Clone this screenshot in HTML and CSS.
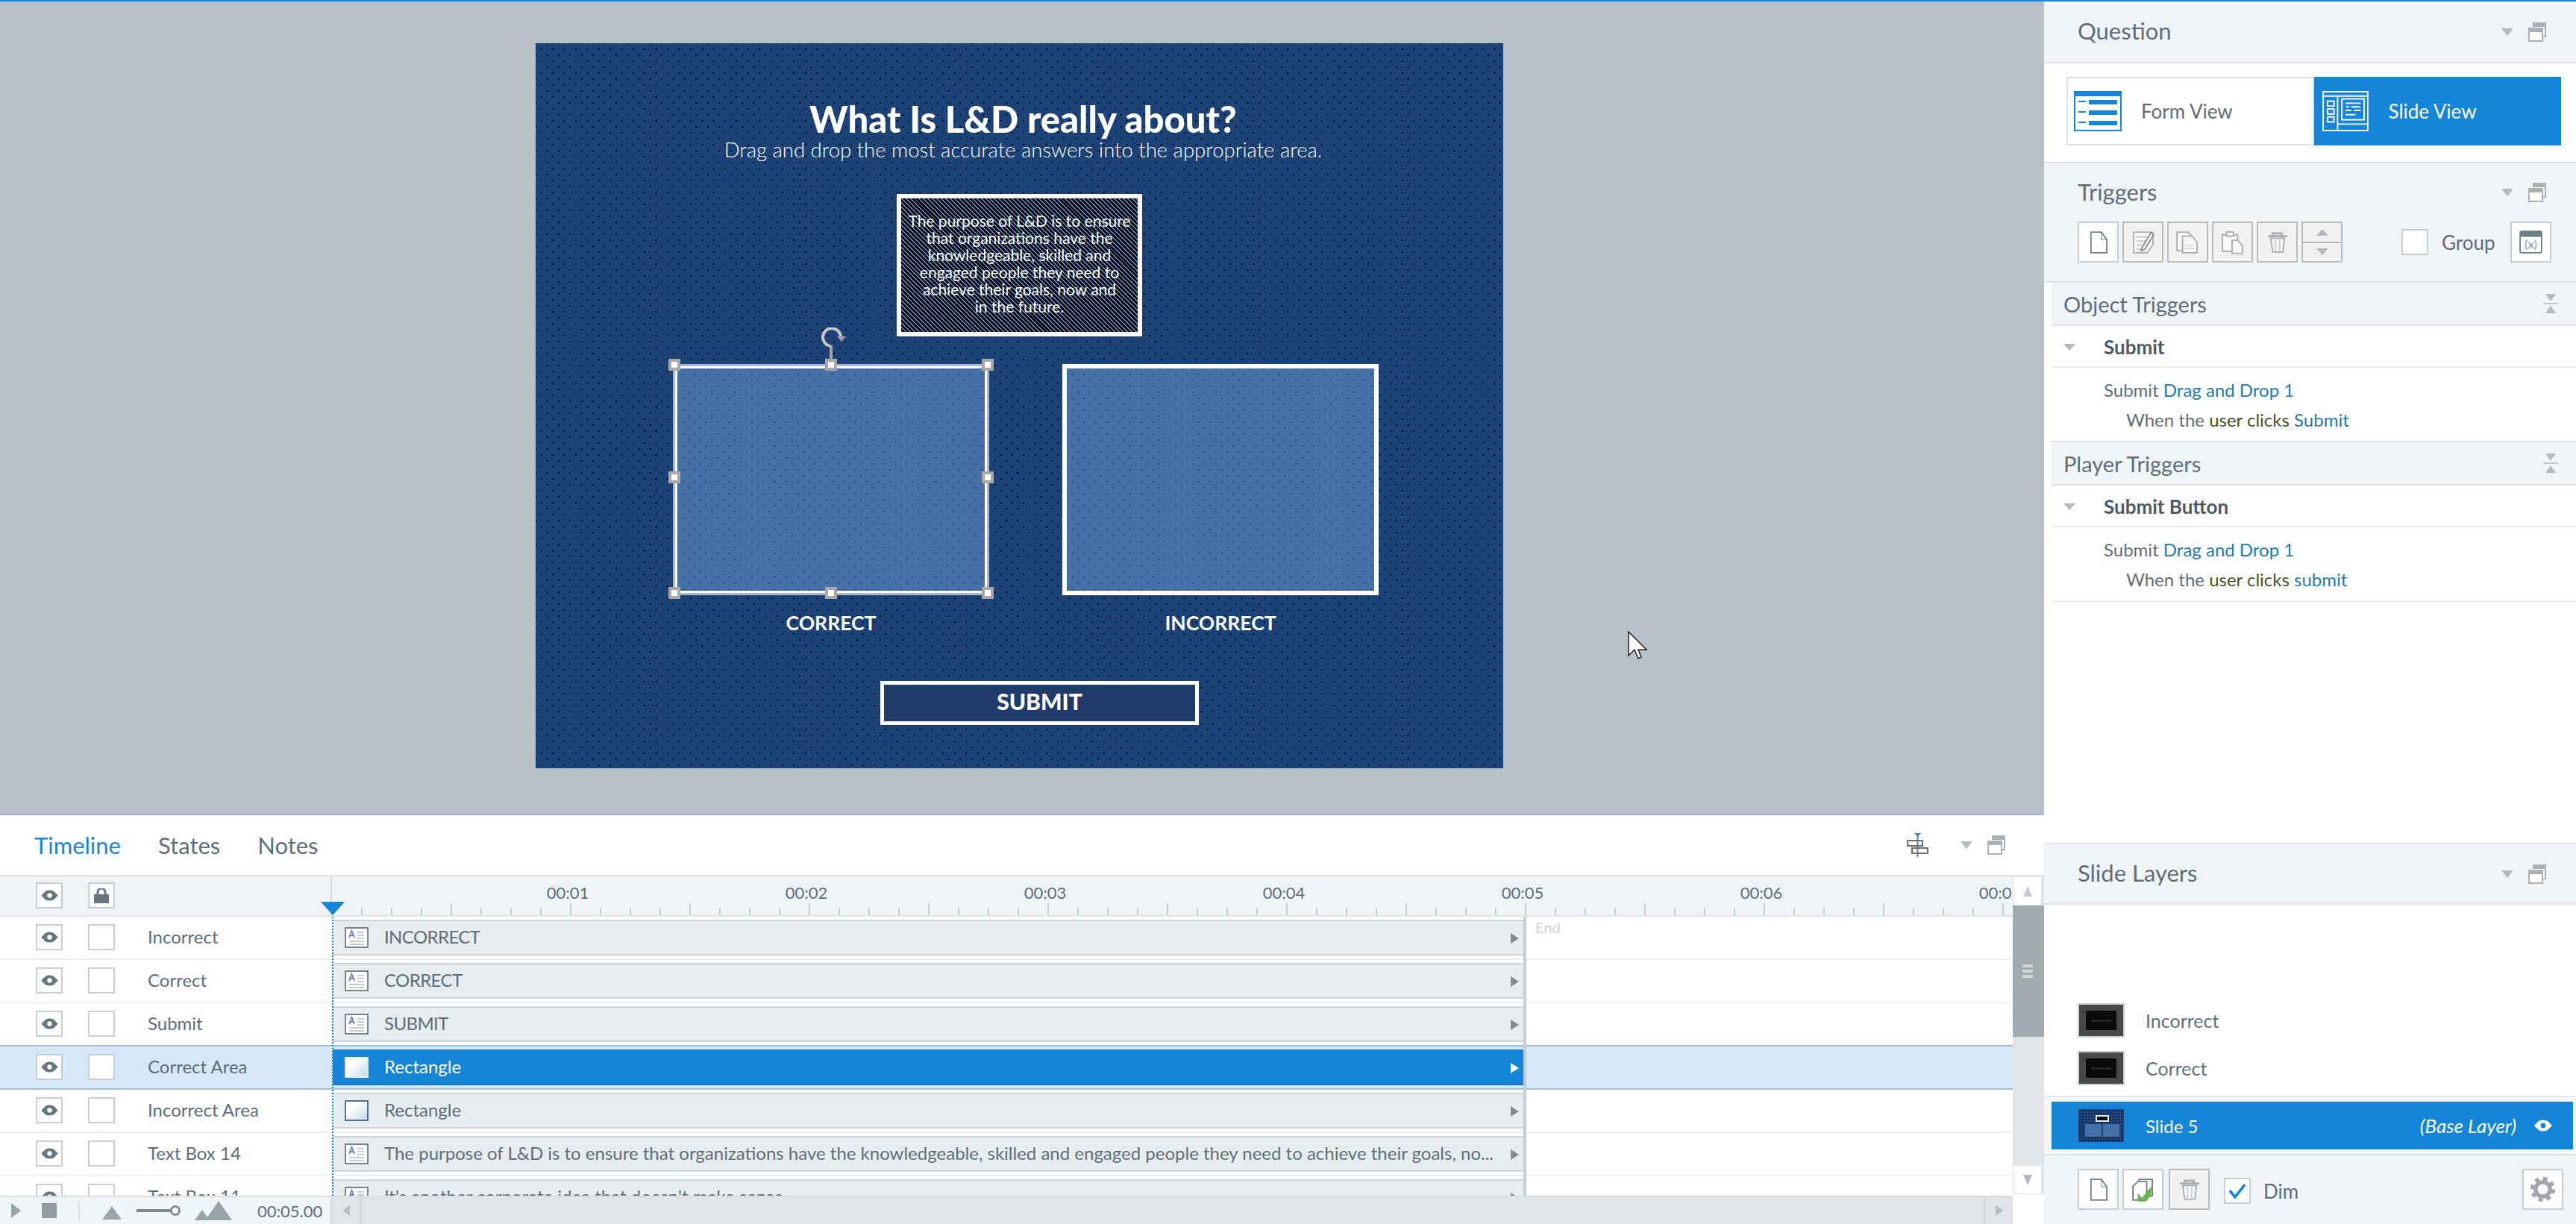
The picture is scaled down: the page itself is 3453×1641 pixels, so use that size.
FILE: index.html
```html
<!DOCTYPE html>
<html lang="en">
<head>
    <meta charset="UTF-8">
    <title>Slide 5 - Drag and Drop</title>
    <link rel="stylesheet" href="styles.css">
</head>
<body>

<svg class="defs" width="0" height="0">
    <symbol id="eye" viewBox="0 0 24 16"><path d="M0 8 L6 2 Q12 -1 18 2 L24 8 L18 14 Q12 17 6 14Z" fill="#66767e"/><circle cx="12" cy="8" r="3.4" fill="#fff"/></symbol>
    <symbol id="doc" viewBox="0 0 55 55"><path d="M17 13h15l8 11v19H17z" fill="#fff" stroke="#6f7f85" stroke-width="2"/><path d="M32 13v11h8" fill="none" stroke="#6f7f85" stroke-width="1"/></symbol>
    <symbol id="trash" viewBox="0 0 55 55"><path d="M14 19h28M21 19v-4h13v4" fill="none" stroke="#a8aeb2" stroke-width="3"/><path d="M18 22h20l-2 20H21z" fill="#f4f4f4" stroke="#a8aeb2" stroke-width="2"/><path d="M25 24v16M31 24v16" stroke="#cfd3d6" stroke-width="2"/></symbol>
    <symbol id="textbar" viewBox="0 0 32 28"><rect x="1" y="1" width="30" height="26" fill="#fff" stroke="#76848c" stroke-width="2"/><path d="M6 14 L9.5 5 L13 14 M7.5 11h4" fill="none" stroke="#7786bd" stroke-width="2"/><path d="M17 7h9M17 11h9M17 15h9M6 19h20M6 23h20" stroke="#c5cbd0" stroke-width="2"/></symbol>
    <symbol id="win" viewBox="0 0 24 26"><path d="M6 1h17v18h-5" fill="#fff" stroke="#a9b1b7" stroke-width="2"/><rect x="6" y="1" width="17" height="5" fill="#a9b1b7"/><rect x="1" y="8" width="18" height="17" fill="#fff" stroke="#a9b1b7" stroke-width="2"/><rect x="1" y="8" width="18" height="5" fill="#a9b1b7"/></symbol>
    <symbol id="collapse" viewBox="0 0 20 26"><path d="M3 0h14l-7 10zM10 16l7 10H3z" fill="#b2bac0"/><path d="M0 13h20" stroke="#b2bac0" stroke-width="1.5"/></symbol>
</svg>

<div class="app">
    <div class="workspace">
        <div class="stage">
            <div class="slide">
                <h1 class="slide-title">What Is L&amp;D really about?</h1>
                <p class="slide-sub">Drag and drop the most accurate answers into the appropriate area.</p>

                <div class="drag-text">
                    The purpose of L&amp;D is to ensure<br>
                    that organizations have the<br>
                    knowledgeable, skilled and<br>
                    engaged people they need to<br>
                    achieve their goals, now and<br>
                    in the future.
                </div>

                <div class="area area-correct">
                    <i class="handle h-tl"></i><i class="handle h-tc"></i><i class="handle h-tr"></i>
                    <i class="handle h-ml"></i><i class="handle h-mr"></i>
                    <i class="handle h-bl"></i><i class="handle h-bc"></i><i class="handle h-br"></i>
                    <svg class="rotate" viewBox="0 0 40 44">
                        <path d="M18 42V24" stroke="#a8a8a8" stroke-width="4" fill="none"/>
                        <path d="M17 25A12 12 0 1 1 31 13" stroke="#c8c8c8" stroke-width="4" fill="none"/>
                        <path d="M26 12h12l-6 7z" fill="#a0a0a0"/>
                    </svg>
                </div>
                <div class="area area-incorrect"></div>

                <div class="area-label label-correct">CORRECT</div>
                <div class="area-label label-incorrect">INCORRECT</div>

                <div class="slide-submit">SUBMIT</div>
            </div>

            <svg class="cursor" viewBox="0 0 28 40">
                <path d="M1 1V33L9 25L14 37L18 35L14 25H25Z" fill="#fff" stroke="#222" stroke-width="1.500"/>
            </svg>
        </div>

        <div class="timeline">
            <div class="tabs">
                <span class="tab active">Timeline</span>
                <span class="tab">States</span>
                <span class="tab">Notes</span>
                <svg class="align-icon" viewBox="0 0 29 32">
                    <path d="M10 0h9l-4.500 5z" fill="#4d7fb5"/>
                    <path d="M14.500 3v29" stroke="#4d7fb5" stroke-width="2"/>
                    <rect x="1" y="10" width="20" height="7" fill="none" stroke="#6e6e6e" stroke-width="2"/>
                    <rect x="7" y="20" width="21" height="7" fill="none" stroke="#6e6e6e" stroke-width="2"/>
                </svg>
                <span class="drop"></span>
                <svg class="win-icon"><use href="#win"/></svg>
            </div>

            <div class="tl-body">
                <div class="tl-main">
                    <div class="ruler-row">
                        <div class="ruler-head">
                            <span class="tbtn"><svg class="eye"><use href="#eye"/></svg></span>
                            <span class="tbtn">
                                <svg class="lock" viewBox="0 0 20 20"><path d="M5 9V5a5 5 0 0 1 10 0v4" fill="none" stroke="#66767e" stroke-width="3"/><rect y="8" width="20" height="12" fill="#66767e"/></svg>
                            </span>
                        </div>
                        <div class="ruler">
                            <div class="ruler-labels">
                                <span>00:01</span><span>00:02</span><span>00:03</span><span>00:04</span>
                                <span>00:05</span><span>00:06</span><span>00:07</span>
                            </div>
                        </div>
                    </div>

                    <div class="rows">
                        <div class="row">
                            <div class="row-head"><span class="tbtn"><svg class="eye"><use href="#eye"/></svg></span><span class="tbtn"></span><span class="row-name">Incorrect</span></div>
                            <div class="bar"><svg class="bar-icon"><use href="#textbar"/></svg><span class="bar-text caps">INCORRECT</span><span class="bar-arrow"></span></div>
                            <div class="row-rest"><span class="end-text">End</span></div>
                        </div>
                        <div class="row">
                            <div class="row-head"><span class="tbtn"><svg class="eye"><use href="#eye"/></svg></span><span class="tbtn"></span><span class="row-name">Correct</span></div>
                            <div class="bar"><svg class="bar-icon"><use href="#textbar"/></svg><span class="bar-text caps">CORRECT</span><span class="bar-arrow"></span></div>
                            <div class="row-rest"></div>
                        </div>
                        <div class="row">
                            <div class="row-head"><span class="tbtn"><svg class="eye"><use href="#eye"/></svg></span><span class="tbtn"></span><span class="row-name">Submit</span></div>
                            <div class="bar"><svg class="bar-icon"><use href="#textbar"/></svg><span class="bar-text caps">SUBMIT</span><span class="bar-arrow"></span></div>
                            <div class="row-rest"></div>
                        </div>
                        <div class="row selected">
                            <div class="row-head"><span class="tbtn"><svg class="eye"><use href="#eye"/></svg></span><span class="tbtn"></span><span class="row-name">Correct Area</span></div>
                            <div class="bar"><span class="rect-icon"></span><span class="bar-text">Rectangle</span><span class="bar-arrow"></span></div>
                            <div class="row-rest"></div>
                        </div>
                        <div class="row">
                            <div class="row-head"><span class="tbtn"><svg class="eye"><use href="#eye"/></svg></span><span class="tbtn"></span><span class="row-name">Incorrect Area</span></div>
                            <div class="bar"><span class="rect-icon"></span><span class="bar-text">Rectangle</span><span class="bar-arrow"></span></div>
                            <div class="row-rest"></div>
                        </div>
                        <div class="row">
                            <div class="row-head"><span class="tbtn"><svg class="eye"><use href="#eye"/></svg></span><span class="tbtn"></span><span class="row-name">Text Box 14</span></div>
                            <div class="bar"><svg class="bar-icon"><use href="#textbar"/></svg><span class="bar-text">The purpose of L&amp;D is to ensure that organizations have the knowledgeable, skilled and engaged people they need to achieve their goals, no...</span><span class="bar-arrow"></span></div>
                            <div class="row-rest"></div>
                        </div>
                        <div class="row">
                            <div class="row-head"><span class="tbtn"><svg class="eye"><use href="#eye"/></svg></span><span class="tbtn"></span><span class="row-name">Text Box 11</span></div>
                            <div class="bar"><svg class="bar-icon"><use href="#textbar"/></svg><span class="bar-text">It's another corporate idea that doesn't make sense.</span><span class="bar-arrow"></span></div>
                            <div class="row-rest"></div>
                        </div>
                        <i class="end-line"></i>
                        <i class="play-line"></i>
                    </div>

                    <div class="tl-foot">
                        <div class="tl-controls">
                            <i class="play"></i>
                            <i class="stop"></i>
                            <i class="ctl-sep"></i>
                            <svg class="zoom-small" viewBox="0 0 26 18"><path d="M0 18L13 0L26 18z" fill="#98a3aa"/></svg>
                            <svg class="zoom-slider" viewBox="0 0 60 16"><path d="M0 8h46" stroke="#7f8c93" stroke-width="4"/><circle cx="52" cy="8" r="5.500" fill="#fff" stroke="#7f8c93" stroke-width="3"/></svg>
                            <svg class="zoom-big" viewBox="0 0 52 26"><path d="M0 26L10 12L20 26zM14 26L32 0L50 26z" fill="#98a3aa"/></svg>
                            <span class="tl-time">00:05.00</span>
                        </div>
                        <div class="hscroll">
                            <span class="hs-btn"><i class="hs-left"></i></span>
                            <span class="hs-track"></span>
                            <span class="hs-btn end"><i class="hs-right"></i></span>
                        </div>
                    </div>
                </div>

                <div class="vscroll">
                    <span class="vs-btn"><i class="vs-up"></i></span>
                    <span class="vs-thumb"><i></i><i></i><i></i></span>
                    <span class="vs-track"></span>
                    <span class="vs-btn"><i class="vs-down"></i></span>
                    <span class="vs-corner"></span>
                </div>
            </div>
        </div>
    </div>

    <div class="panel">
        <div class="panel-head">
            <span class="panel-title">Question</span>
            <span class="drop"></span>
            <svg class="win-icon"><use href="#win"/></svg>
        </div>
        <div class="view-switch">
            <div class="view-btn">
                <svg class="view-icon" viewBox="0 0 64 54">
                    <rect x="1" y="1" width="62" height="52" fill="#fff" stroke="#1485d8" stroke-width="2"/>
                    <rect width="64" height="7" fill="#1485d8"/>
                    <path d="M6 14h10M6 28h10M6 42h10" stroke="#1485d8" stroke-width="2"/>
                    <path d="M20 12h38v6H20zM20 26h38v6H20zM20 40h38v6H20z" fill="#1485d8"/>
                </svg>
                <span>Form View</span>
            </div>
            <div class="view-btn on">
                <svg class="view-icon" viewBox="0 0 64 56">
                    <rect x="1" y="1" width="62" height="54" fill="none" stroke="#fff" stroke-width="2"/>
                    <path d="M0 7h64M21 7v48M21 46h42" stroke="#fff" stroke-width="2" fill="none"/>
                    <rect x="7" y="14" width="9" height="7" fill="none" stroke="#fff" stroke-width="2"/>
                    <rect x="7" y="25" width="9" height="7" fill="none" stroke="#fff" stroke-width="2"/>
                    <rect x="7" y="36" width="9" height="7" fill="none" stroke="#fff" stroke-width="2"/>
                    <rect x="27" y="11" width="31" height="29" fill="none" stroke="#fff" stroke-width="2"/>
                    <path d="M32 17h21M33 22h4M40 22h13M32 27h8M44 27h9M32 33h14" stroke="#fff" stroke-width="2"/>
                </svg>
                <span>Slide View</span>
            </div>
        </div>

        <div class="triggers-box">
            <div class="panel-head plain">
                <span class="panel-title">Triggers</span>
                <span class="drop"></span>
                <svg class="win-icon"><use href="#win"/></svg>
            </div>
            <div class="toolbar">
                <span class="tool"><svg><use href="#doc"/></svg></span>
                <span class="tool off">
                    <svg viewBox="0 0 55 55">
                        <path d="M14 13h28v18l-8 12H14z" fill="#f8f8f8" stroke="#aab0b4" stroke-width="2"/>
                        <path d="M18 20h16M18 26h14M18 32h12M18 38h10" stroke="#c4c8cb" stroke-width="2"/>
                        <path d="M26 36l13-22 4 3-13 21-5 2z" fill="#fff" stroke="#8c8c8c" stroke-width="2"/>
                    </svg>
                </span>
                <span class="tool off">
                    <svg viewBox="0 0 55 55">
                        <path d="M12 13h16l6 7v20H12z" fill="#f8f8f8" stroke="#a8aeb2" stroke-width="2"/>
                        <path d="M20 19h14l7 9v15H20z" fill="#f8f8f8" stroke="#a8aeb2" stroke-width="2"/>
                        <path d="M24 32h13M24 37h13" stroke="#cfd3d6" stroke-width="1.500"/>
                    </svg>
                </span>
                <span class="tool off">
                    <svg viewBox="0 0 55 55">
                        <path d="M13 17h22v24H13z" fill="#f8f8f8" stroke="#a8aeb2" stroke-width="2"/>
                        <rect x="19" y="13" width="10" height="6" fill="#f8f8f8" stroke="#a8aeb2" stroke-width="2"/>
                        <path d="M27 25h8l7 8v11H27z" fill="#f8f8f8" stroke="#a8aeb2" stroke-width="2"/>
                    </svg>
                </span>
                <span class="tool off"><svg><use href="#trash"/></svg></span>
                <span class="tool-split">
                    <span class="split-part"><i class="tri-up"></i></span>
                    <span class="split-part"><i class="tri-down"></i></span>
                </span>
                <span class="check"></span>
                <span class="check-label">Group</span>
                <span class="tool var-tool">
                    <svg viewBox="0 0 55 55">
                        <rect x="12" y="12" width="31" height="31" rx="2" fill="#fff" stroke="#6f7f85" stroke-width="2"/>
                        <rect x="12" y="12" width="31" height="8" fill="#6f7f85"/>
                        <text x="27.500" y="37" text-anchor="middle" class="var-text">(x)</text>
                    </svg>
                </span>
            </div>
        </div>

        <div class="trigger-list">
            <div class="group-head">
                <span class="group-title">Object Triggers</span>
                <svg class="collapse"><use href="#collapse"/></svg>
            </div>
            <div class="trig-row"><i class="tri-down small"></i><b>Submit</b></div>
            <div class="trig-detail">
                <div>Submit <span class="link">Drag and Drop 1</span></div>
                <div class="indent">When the <span class="kw">user clicks</span> <span class="link">Submit</span></div>
            </div>
            <div class="group-head">
                <span class="group-title">Player Triggers</span>
                <svg class="collapse"><use href="#collapse"/></svg>
            </div>
            <div class="trig-row"><i class="tri-down small"></i><b>Submit Button</b></div>
            <div class="trig-detail">
                <div>Submit <span class="link">Drag and Drop 1</span></div>
                <div class="indent">When the <span class="kw">user clicks</span> <span class="link">submit</span></div>
            </div>
        </div>

        <div class="panel-head layers-head">
            <span class="panel-title">Slide Layers</span>
            <span class="drop"></span>
            <svg class="win-icon"><use href="#win"/></svg>
        </div>
        <div class="layers">
            <div class="layer">
                <span class="thumb"><i></i></span>
                <span>Incorrect</span>
            </div>
            <div class="layer">
                <span class="thumb"><i></i></span>
                <span>Correct</span>
            </div>
        </div>
        <div class="base-wrap">
            <div class="base-layer">
                <span class="thumb-base"><i class="tb-text"></i><i class="tb-a"></i><i class="tb-b"></i></span>
                <span class="base-name">Slide 5</span>
                <em>(Base Layer)</em>
                <svg class="eye-white" viewBox="0 0 24 16"><path d="M0 8 L6 2 Q12 -1 18 2 L24 8 L18 14 Q12 17 6 14Z" fill="#fff"/><circle cx="12" cy="8" r="3.400" fill="#1485d8"/></svg>
            </div>
        </div>
        <div class="layers-foot">
            <span class="tool"><svg><use href="#doc"/></svg></span>
            <span class="tool">
                <svg viewBox="0 0 55 55">
                    <path d="M22 13h19v24H22z" fill="#fff" stroke="#6f7f85" stroke-width="2"/>
                    <path d="M13 23l7-7h13v27H13z" fill="#fff" stroke="#6f7f85" stroke-width="2"/>
                    <path d="M20 33l6 7 14-17-1 14-8 8H20z" fill="#69b04a"/>
                </svg>
            </span>
            <span class="tool off"><svg><use href="#trash"/></svg></span>
            <span class="check dim">
                <svg viewBox="0 0 35 35"><path d="M6 17l8 10L29 8" fill="none" stroke="#1485d8" stroke-width="4"/></svg>
            </span>
            <span class="check-label">Dim</span>
            <span class="tool gear-tool">
                <svg viewBox="0 0 55 55">
                    <circle cx="27.500" cy="27.500" r="15" fill="none" stroke="#a2a6ab" stroke-width="6" stroke-dasharray="6 5.780"/>
                    <circle cx="27.500" cy="27.500" r="10.500" fill="none" stroke="#a2a6ab" stroke-width="6"/>
                </svg>
            </span>
        </div>
    </div>
</div>

</body>
</html>
```

FILE: styles.css
```css
* {
    box-sizing: border-box;
}

body {
    margin: 0;
    width: 3453px;
    height: 1641px;
    overflow: hidden;
    background: #fff;
    font-family: Lato, "Open Sans", sans-serif;
    color: #5f6e78;
}

.defs {
    position: absolute;
}

.app {
    display: flex;
    height: 1641px;
    border-top: 2px solid #1485d8;
}

/* left side */

.workspace {
    width: 2740px;
    flex: none;
    display: flex;
    flex-direction: column;
}

.stage {
    position: relative;
    height: 1088px;
    padding: 56px 0 0 718px;
    background: #b8c0c8;
}

.cursor {
    position: absolute;
    left: 2182px;
    top: 844px;
    width: 28px;
    height: 40px;
}

/* slide canvas */

.slide {
    position: relative;
    width: 1297px;
    height: 972px;
    background-color: #1c4277;
    background-image:
        radial-gradient(circle, #050c1c 1.3px, transparent 1.5px),
        radial-gradient(circle, #050c1c 1.3px, transparent 1.5px);
    background-size: 15.4px 16px;
    background-position: 0 0, 7.7px 8px;
    color: #fff;
}

.slide-title {
    position: absolute;
    left: 0;
    right: 0;
    top: 73px;
    margin: 0;
    padding-left: 10px;
    text-align: center;
    font-size: 49px;
    line-height: 56px;
    font-weight: 900;
}

.slide-sub {
    position: absolute;
    left: 0;
    right: 0;
    top: 124px;
    margin: 0;
    padding-left: 10px;
    text-align: center;
    font-size: 27.5px;
    line-height: 38px;
    font-weight: 300;
}

.drag-text {
    position: absolute;
    left: 484px;
    top: 202px;
    width: 329px;
    height: 191px;
    border: 6px solid #fff;
    padding-top: 18px;
    background-color: #020408;
    background-image: repeating-linear-gradient(45deg, #5f8cc4 0 1.4px, #020408 1.4px 4.2px);
    text-align: center;
    font-size: 21px;
    line-height: 23px;
}

.area {
    position: absolute;
    top: 430px;
    width: 424px;
    height: 310px;
    border: 6px solid #fff;
    background-color: #4670a8;
    background-image:
        radial-gradient(circle, #34507c 1.1px, transparent 1.5px),
        radial-gradient(circle, #34507c 1.1px, transparent 1.5px);
    background-size: 15.4px 16px;
    background-position: 0 0, 7.7px 8px;
}

.area-correct {
    left: 184px;
    outline: 3px solid #a9b8cc;
    outline-offset: -3px;
}

.area-incorrect {
    left: 706px;
}

.handle {
    position: absolute;
    width: 16px;
    height: 16px;
    background: #fff;
    border: 4px solid #a8a8a8;
}

.h-tl { left: -12px; top: -13px; }
.h-tc { left: 198px; top: -13px; }
.h-tr { left: 408px; top: -13px; }
.h-ml { left: -12px; top: 138px; }
.h-mr { left: 408px; top: 138px; }
.h-bl { left: -12px; top: 293px; }
.h-bc { left: 198px; top: 293px; }
.h-br { left: 408px; top: 293px; }

.rotate {
    position: absolute;
    left: 188px;
    top: -55px;
    width: 40px;
    height: 44px;
}

.area-label {
    position: absolute;
    top: 762px;
    width: 424px;
    text-align: center;
    font-size: 26.5px;
    line-height: 30px;
    font-weight: 700;
}

.label-correct {
    left: 184px;
}

.label-incorrect {
    left: 706px;
}

.slide-submit {
    position: absolute;
    left: 462px;
    top: 855px;
    width: 427px;
    height: 59px;
    border: 5px solid #fff;
    background: #1e3a68;
    text-align: center;
    font-size: 30px;
    line-height: 45px;
    font-weight: 900;
}

/* timeline */

.timeline {
    flex: 1;
    display: flex;
    flex-direction: column;
    min-height: 0;
    border-top: 3px solid #b0b7c6;
    background: #fff;
}

.tabs {
    height: 82px;
    flex: none;
    display: flex;
    align-items: center;
    padding-left: 46px;
    border-bottom: 2px solid #e0e4e8;
}

.tab {
    font-size: 31px;
    margin-right: 50px;
}

.tab.active {
    color: #1485d8;
}

.align-icon {
    width: 29px;
    height: 32px;
    margin-left: auto;
}

.drop {
    width: 0;
    height: 0;
    border-left: 8px solid transparent;
    border-right: 8px solid transparent;
    border-top: 10px solid #b2bac0;
}

.tabs .drop {
    margin-left: 43px;
}

.win-icon {
    width: 24px;
    height: 26px;
    margin-left: 20px;
}

.tabs .win-icon {
    margin-right: 52px;
}

.tl-body {
    flex: 1;
    min-height: 0;
    display: flex;
}

.tl-main {
    flex: 1;
    min-width: 0;
    display: flex;
    flex-direction: column;
}

.ruler-row {
    position: relative;
    height: 54px;
    flex: none;
    display: flex;
    background: #f0f4f7;
    border-bottom: 2px solid #e0e4e8;
}

.ruler-row::after {
    content: "";
    position: absolute;
    left: 430px;
    bottom: 0;
    border-left: 16px solid transparent;
    border-right: 16px solid transparent;
    border-top: 18px solid #1485d8;
}

.ruler-head {
    width: 445px;
    flex: none;
    display: flex;
    gap: 34px;
    padding: 8px 0 0 48px;
    border-right: 2px solid #d6dade;
}

.tbtn {
    width: 36px;
    height: 35px;
    flex: none;
    display: flex;
    align-items: center;
    justify-content: center;
    background: #fff;
    border: 2px solid #c5ced6;
}

.eye {
    width: 23px;
    height: 15px;
}

.lock {
    width: 20px;
    height: 20px;
}

.ruler {
    flex: 1;
    min-width: 0;
    overflow: hidden;
    background-image:
        linear-gradient(to right, #c4ced6 2px, transparent 2px),
        linear-gradient(to right, #c4ced6 2px, transparent 2px);
    background-size: 160px 16px, 40px 10px;
    background-position: -1px 100%, -1px 100%;
    background-repeat: repeat-x;
}

.ruler-labels {
    display: flex;
    padding-left: 156px;
    padding-top: 8px;
}

.ruler-labels span {
    width: 320px;
    flex: none;
    text-align: center;
    font-size: 22px;
    line-height: 28px;
}

.rows {
    position: relative;
    flex: 1;
    min-height: 0;
    overflow: hidden;
}

.row {
    height: 58px;
    display: flex;
    border-bottom: 2px solid #eef1f3;
}

.row.selected {
    background: #d6e8f7;
    border-bottom-color: #9cc0e0;
    box-shadow: 0 -2px 0 #9cc0e0;
}

.row-head {
    width: 445px;
    flex: none;
    display: flex;
    align-items: center;
    gap: 34px;
    padding: 0 0 2px 48px;
}

.row-head .row-name {
    margin-left: 10px;
    margin-bottom: 2px;
    font-size: 24px;
}

.bar {
    width: 1597px;
    height: 48px;
    margin: 4px 0 0 1px;
    flex: none;
    display: flex;
    align-items: center;
    padding-left: 16px;
    background: #e7ecef;
    border-top: 2px solid #cdd5dc;
    border-bottom: 2px solid #cdd5dc;
    font-size: 24px;
}

.selected .bar {
    background: #1485d8;
    border-color: #1485d8 #1485d8 #0f77c5;
    color: #fff;
}

.bar-icon {
    width: 32px;
    height: 28px;
    flex: none;
}

.rect-icon {
    width: 32px;
    height: 28px;
    flex: none;
    border: 2px solid #56708c;
    background: linear-gradient(135deg, #fff 30%, #c4dcec);
}

.selected .rect-icon {
    border-color: #e8eef4;
}

.bar-text {
    margin: 0 0 3px 21px;
    flex: 1;
    min-width: 0;
    white-space: nowrap;
    overflow: hidden;
}

.bar-text.caps {
    letter-spacing: -0.6px;
}

.bar-arrow {
    width: 0;
    height: 0;
    margin: 2px 7px 0 12px;
    border-top: 7px solid transparent;
    border-bottom: 7px solid transparent;
    border-left: 11px solid #808a90;
}

.selected .bar-arrow {
    border-left-color: #fff;
}

.row-rest {
    flex: 1;
    padding-left: 15px;
}

.end-text {
    font-size: 20px;
    line-height: 28px;
    color: #ccd3d8;
}

.end-line {
    position: absolute;
    left: 2042px;
    top: 0;
    bottom: 0;
    width: 4px;
    background: #c4ced6;
}

.play-line {
    position: absolute;
    left: 445px;
    top: 0;
    bottom: 0;
    border-left: 2px dotted #1485d8;
}

.tl-foot {
    height: 38px;
    flex: none;
    display: flex;
    border-top: 2px solid #d9dee2;
}

.tl-controls {
    width: 445px;
    flex: none;
    display: flex;
    align-items: center;
    padding-left: 15px;
    background: #f0f4f7;
    border-right: 2px solid #d9dee2;
}

.play {
    border-top: 10px solid transparent;
    border-bottom: 10px solid transparent;
    border-left: 13px solid #98a3aa;
}

.stop {
    width: 20px;
    height: 20px;
    margin-left: 28px;
    background: #8f9aa1;
}

.ctl-sep {
    width: 2px;
    height: 26px;
    margin-left: 29px;
    background: #dde2e6;
}

.zoom-small {
    width: 26px;
    height: 18px;
    margin: 6px 0 0 30px;
}

.zoom-slider {
    width: 60px;
    height: 16px;
    margin-left: 20px;
}

.zoom-big {
    width: 52px;
    height: 26px;
    margin: 0 0 0 18px;
}

.tl-time {
    margin-left: 32px;
    font-size: 22px;
}

.hscroll {
    flex: 1;
    display: flex;
    background: #e0e4e8;
}

.hs-btn {
    width: 39px;
    flex: none;
    display: flex;
    align-items: center;
    justify-content: center;
    border-right: 2px solid #d2d7db;
}

.hs-btn.end {
    border-right: 0;
    border-left: 2px solid #d2d7db;
}

.hs-track {
    flex: 1;
}

.hs-left {
    border-top: 7px solid transparent;
    border-bottom: 7px solid transparent;
    border-right: 10px solid #b6bec3;
}

.hs-right {
    border-top: 7px solid transparent;
    border-bottom: 7px solid transparent;
    border-left: 10px solid #b6bec3;
}

.vscroll {
    width: 42px;
    flex: none;
    display: flex;
    flex-direction: column;
    background: #e0e4e8;
}

.vs-btn {
    height: 39px;
    margin-right: 3px;
    flex: none;
    display: flex;
    align-items: center;
    justify-content: center;
    background: #fff;
    border: 1px solid #dfe3e6;
}

.vs-up {
    border-left: 6px solid transparent;
    border-right: 6px solid transparent;
    border-bottom: 14px solid #c3cbd0;
}

.vs-down {
    border-left: 6px solid transparent;
    border-right: 6px solid transparent;
    border-top: 14px solid #b2bac0;
}

.vs-thumb {
    height: 176px;
    flex: none;
    display: flex;
    flex-direction: column;
    align-items: center;
    justify-content: center;
    gap: 3px;
    padding-right: 3px;
    background: #a2abaf;
}

.vs-thumb i {
    width: 14px;
    height: 4px;
    background: #cfd5d8;
}

.vs-track {
    flex: 1;
}

.vs-corner {
    height: 40px;
    flex: none;
    background: #fff;
}

/* right panel */

.panel {
    flex: 1;
    min-width: 0;
    display: flex;
    flex-direction: column;
    background: #fff;
}

.panel-head {
    height: 83px;
    flex: none;
    display: flex;
    align-items: center;
    padding: 0 40px 0 45px;
    background: #f0f4f7;
    border-bottom: 2px solid #e0e4e8;
}

.panel-head.plain {
    height: 78px;
    border-bottom: 0;
}

.panel-title {
    margin: 0 auto 3px 0;
    font-size: 31px;
}

.view-switch {
    height: 134px;
    flex: none;
    display: flex;
    padding: 18px 20px 0 30px;
    border-bottom: 2px solid #e0e4e8;
}

.view-btn {
    flex: 1;
    height: 92px;
    display: flex;
    align-items: center;
    padding-left: 8px;
    gap: 26px;
    border: 2px solid #e0e4e8;
    font-size: 26px;
}

.view-btn.on {
    background: #1485d8;
    border-color: #1485d8;
    color: #fff;
}

.view-icon {
    width: 64px;
    height: 54px;
    flex: none;
}

.triggers-box {
    height: 160px;
    flex: none;
    background: #f0f4f7;
    border-bottom: 2px solid #e0e4e8;
}

.toolbar {
    display: flex;
    align-items: center;
    gap: 5px;
    padding-left: 45px;
}

.tool {
    width: 55px;
    height: 55px;
    flex: none;
    background: #fff;
    border: 2px solid #c5ced6;
}

.tool svg {
    display: block;
    width: 51px;
    height: 51px;
}

.tool.off,
.tool-split {
    background: #f1f1f1;
    border-color: #b8bcbe;
}

.tool-split {
    width: 55px;
    height: 55px;
    flex: none;
    display: flex;
    flex-direction: column;
    border: 2px solid #b8bcbe;
}

.split-part {
    flex: 1;
    display: flex;
    align-items: center;
    justify-content: center;
}

.split-part + .split-part {
    border-top: 2px solid #b8bcbe;
}

.tri-up {
    border-left: 8px solid transparent;
    border-right: 8px solid transparent;
    border-bottom: 9px solid #b2bac0;
}

.tri-down {
    border-left: 8px solid transparent;
    border-right: 8px solid transparent;
    border-top: 9px solid #b2bac0;
}

.check {
    width: 36px;
    height: 35px;
    flex: none;
    margin-left: 74px;
    background: #fff;
    border: 2px solid #c5ced6;
}

.check svg {
    display: block;
    width: 32px;
    height: 31px;
}

.check-label {
    margin-left: 13px;
    font-size: 26px;
}

.var-tool {
    margin-left: auto;
    margin-right: 33px;
}

.var-text {
    font-size: 17px;
    font-weight: 700;
    fill: #94a9d6;
}

.trigger-list {
    flex: 1;
    min-height: 0;
    padding-left: 10px;
}

.group-head {
    height: 58px;
    display: flex;
    align-items: center;
    justify-content: space-between;
    padding: 0 24px 0 16px;
    background: #f0f4f7;
    border-bottom: 2px solid #e0e4e8;
}

.group-title {
    font-size: 29px;
}

.collapse {
    width: 20px;
    height: 26px;
}

.trig-row {
    height: 56px;
    display: flex;
    align-items: center;
    padding: 2px 0 0 16px;
    gap: 38px;
    border-bottom: 2px solid #eaecee;
    font-size: 26px;
}

.trig-row b {
    color: #4d5a64;
}

.trig-detail {
    height: 100px;
    padding: 10px 0 0 70px;
    border-bottom: 2px solid #e0e4e8;
    font-size: 24px;
    line-height: 40px;
}

.trigger-list .trig-detail:last-child {
    border-bottom-color: #eaecee;
}

.trig-detail .indent {
    padding-left: 30px;
}

.link {
    color: #1f7bab;
}

.kw {
    color: #46521f;
}

.layers-head {
    height: 83px;
    border-top: 2px solid #e0e4e8;
}

.layers {
    height: 258px;
    flex: none;
    display: flex;
    flex-direction: column;
    justify-content: flex-end;
    gap: 18px;
    padding: 0 0 14px 45px;
    border-bottom: 2px solid #e0e4e8;
}

.layer {
    display: flex;
    align-items: center;
    gap: 28px;
    font-size: 25px;
}

.thumb {
    width: 63px;
    height: 46px;
    flex: none;
    display: flex;
    align-items: center;
    justify-content: center;
    background: #484848;
    border: 2px solid #c4ced4;
}

.thumb i {
    width: 41px;
    height: 26px;
    background:
        linear-gradient(#242424, #242424) center / 28px 3px no-repeat,
        #0a0a0a;
}

.base-wrap {
    height: 78px;
    flex: none;
    padding: 6px 4px 0 10px;
    background: #f7f8f9;
    border-bottom: 2px solid #e0e4e8;
}

.base-layer {
    height: 64px;
    display: flex;
    align-items: center;
    padding-left: 36px;
    background: #1485d8;
    color: #fff;
    font-size: 24px;
}

.thumb-base {
    position: relative;
    width: 61px;
    height: 44px;
    flex: none;
    background-color: #1c4277;
    background-image: radial-gradient(circle, #10294e 1px, transparent 1.4px);
    background-size: 4px 4px;
}

.thumb-base i {
    position: absolute;
}

.tb-text {
    left: 23px;
    top: 8px;
    width: 18px;
    height: 9px;
    background: #0a0f1a;
    border: 2px solid #e8ecf2;
}

.tb-a {
    left: 9px;
    top: 20px;
    width: 22px;
    height: 17px;
    background: #4670a8;
}

.tb-b {
    left: 33px;
    top: 20px;
    width: 22px;
    height: 17px;
    background: #4670a8;
}

.base-name {
    margin-left: 29px;
}

.base-layer em {
    margin-left: auto;
    font-size: 26px;
}

.eye-white {
    width: 24px;
    height: 16px;
    margin: 0 28px 0 24px;
}

.layers-foot {
    height: 92px;
    flex: none;
    display: flex;
    align-items: flex-start;
    gap: 5px;
    padding: 18px 17px 0 45px;
    background: #f0f4f7;
}

.layers-foot .tool.off {
    margin-left: 2px;
}

.check.dim {
    margin: 12px 0 0 14px;
}

.layers-foot .check-label {
    margin: 14px 0 0 12px;
}

.gear-tool {
    margin-left: auto;
}
```
